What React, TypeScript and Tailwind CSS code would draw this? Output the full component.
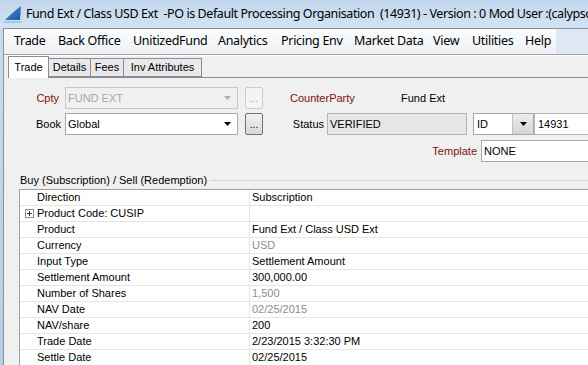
import React from "react";

const ui = { fontFamily: '"Noto Sans", "Open Sans", sans-serif', letterSpacing: "-0.3px" };
const uiTitle = { fontFamily: '"Noto Sans", "Open Sans", sans-serif', letterSpacing: "-0.42px" };
const tah = { fontFamily: '"Liberation Sans", Arial, sans-serif' };

function Arrow({ color = "#000" }: { color?: string }) {
  return (
    <svg width="7" height="4" viewBox="0 0 7 4">
      <path d="M0 0 L7 0 L3.5 4 Z" fill={color} />
    </svg>
  );
}

const menu: [string, string][] = [
  ["Trade", "w-[44px]"],
  ["Back Office", "w-[75px]"],
  ["UnitizedFund", "w-[85px]"],
  ["Analytics", "w-[63px]"],
  ["Pricing Env", "w-[73px]"],
  ["Market Data", "w-[79px]"],
  ["View", "w-[39px]"],
  ["Utilities", "w-[53px]"],
  ["Help", "w-[38px]"],
];

const rows: { k: string; v: string; gray?: boolean; plus?: boolean }[] = [
  { k: "Direction", v: "Subscription" },
  { k: "Product Code: CUSIP", v: "", plus: true },
  { k: "Product", v: "Fund Ext / Class USD Ext" },
  { k: "Currency", v: "USD", gray: true },
  { k: "Input Type", v: "Settlement Amount" },
  { k: "Settlement Amount", v: "300,000.00" },
  { k: "Number of Shares", v: "1,500", gray: true },
  { k: "NAV Date", v: "02/25/2015", gray: true },
  { k: "NAV/share", v: "200" },
  { k: "Trade Date", v: "2/23/2015 3:32:30 PM" },
  { k: "Settle Date", v: "02/25/2015" },
];

export default function App() {
  return (
    <div className="w-[588px] h-[365px] overflow-hidden flex flex-col bg-[#f0f0f0]">
      {/* Title bar */}
      <div className="h-[28px] shrink-0 flex items-center bg-gradient-to-b from-[#c2d6ec] to-[#d3e3f3] overflow-hidden">
        <div className="w-[26px] shrink-0 h-[28px] flex items-center justify-center">
          <svg width="20" height="18" viewBox="0 0 20 18">
            <defs>
              <linearGradient id="sg" x1="0" y1="0" x2="1" y2="1">
                <stop offset="0" stopColor="#5aa0e0" />
                <stop offset="1" stopColor="#1a4f9c" />
              </linearGradient>
            </defs>
            <path d="M2 15 C7 10 12 5 18 1 L17 15 Z" fill="url(#sg)" />
            <path d="M1 16.5 L19 16.5 L19 17.5 L1 17.5 Z" fill="#7fb4e6" />
          </svg>
        </div>
        <div className="text-[12.5px] text-black whitespace-pre leading-none" style={uiTitle}>
          Fund Ext / Class USD Ext  -PO is Default Processing Organisation  (14931) - Version : 0 Mod User :(calypso
        </div>
      </div>
      <div className="flex flex-1 min-h-0">
        {/* left frame */}
        <div className="w-[3px] shrink-0 bg-gradient-to-b from-[#c9dbee] to-[#b6cde6]" />
        <div className="flex-1 flex flex-col border-l border-t border-[#8a9199] min-w-0">
          {/* Menu bar */}
          <div className="h-[25px] shrink-0 flex items-center bg-gradient-to-b from-[#fbfcfd] to-[#eef1f5] text-[12.5px] text-black" style={ui}>
            <div className="w-[3px] shrink-0" />
            {menu.map(([m, w]) => (
              <div key={m} className={`${w} shrink-0 pl-[7px] whitespace-nowrap`}>{m}</div>
            ))}
            <div className="flex-1 h-full bg-[#dde8f4]" />
          </div>
          <div className="h-[2px] shrink-0 bg-[#a0a0a0] border-b border-[#ffffff]" />
          {/* Tabs */}
          <div className="h-[22px] shrink-0 flex items-end text-[11px] pl-[4px]" style={tah}>
            <div className="h-[22px] w-[41px] bg-white border border-b-0 border-[#898c95] flex items-center justify-center">Trade</div>
            <div className="flex-1 flex items-end h-full border-b border-[#898c95]">
              <div className="h-[19px] w-[42px] bg-[#e9e9e9] border border-l-0 border-[#898c95] flex items-center justify-center">Details</div>
              <div className="h-[19px] w-[33px] bg-[#e9e9e9] border border-l-0 border-[#898c95] flex items-center justify-center">Fees</div>
              <div className="h-[19px] w-[78px] bg-[#e9e9e9] border border-l-0 border-[#898c95] flex items-center justify-center">Inv Attributes</div>
            </div>
          </div>
          {/* Form */}
          <div className="flex flex-col pt-[9px] text-[11px] text-black" style={tah}>
            <div className="flex items-center h-[22px]">
              <div className="w-[58px] text-right pr-[3px] text-[#7b1111]">Cpty</div>
              <div className="ml-[3px] w-[173px] h-[22px] border border-[#c8c8c8] bg-[#f0f0f0] flex items-center justify-between pl-[2px] pr-[6px] text-[#a8a8a8]">
                <span>FUND EXT</span>
                <Arrow color="#b0b0b0" />
              </div>
              <div className="ml-[7px] w-[18px] h-[22px] border border-[#cdcdcd] rounded-[2px] bg-[#f4f4f4] flex items-end justify-center pb-[4px] text-[#a0a0a0] text-[10px] leading-none">...</div>
              <div className="ml-[27px] w-[111px] text-[#7b1111]">CounterParty</div>
              <div>Fund Ext</div>
            </div>
            <div className="flex items-center h-[22px] mt-[4px]">
              <div className="w-[58px] text-right pr-[1px]">Book</div>
              <div className="ml-[3px] w-[173px] h-[22px] border border-[#a8a8a8] bg-white flex items-center justify-between pl-[2px] pr-[6px]">
                <span>Global</span>
                <Arrow />
              </div>
              <div className="ml-[7px] w-[18px] h-[22px] border border-[#707070] rounded-[2px] bg-gradient-to-b from-[#f2f2f2] to-[#d8d8d8] flex items-end justify-center pb-[4px] text-[10px] leading-none">...</div>
              <div className="w-[64px] text-right pr-[3px]">Status</div>
              <div className="w-[140px] h-[22px] border border-[#b5b5b5] bg-[#e6e6e6] flex items-center pl-[2px]">VERIFIED</div>
              <div className="ml-[6px] w-[61px] h-[22px] border border-[#a8a8a8] bg-white flex items-center">
                <span className="flex-1 pl-[3px]">ID</span>
                <div className="w-[21px] h-full bg-gradient-to-b from-[#ececec] to-[#d6d6d6] border-l border-[#c0c0c0] flex items-center justify-center"><Arrow /></div>
              </div>
              <div className="flex-1 h-[22px] border border-r-0 border-[#b5b5b5] bg-white flex items-center pl-[3px]">14931</div>
            </div>
            <div className="flex items-center h-[22px] mt-[5px]">
              <div className="w-[477px] text-right pr-[4px] text-[#7b1111]">Template</div>
              <div className="flex-1 h-[22px] border border-r-0 border-[#a8a8a8] bg-white flex items-center pl-[2px]">NONE</div>
            </div>
          </div>
          {/* Group */}
          <div className="mt-[12px] flex items-center h-[13px] text-[11px]" style={tah}>
            <span className="ml-[16px] whitespace-nowrap">Buy (Subscription) / Sell (Redemption)</span>
            <div className="flex-1 ml-[3px] h-px bg-[#d5d5d5]" />
          </div>
          <div className="mt-[2px] ml-[15px] border-l border-t border-[#a0a0a0] bg-white text-[11px]" style={tah}>
            {rows.map((r) => (
              <div key={r.k} className="flex h-[16px] border-b border-[#e6e6e6]">
                <div className="w-[230px] flex items-center border-r border-[#e6e6e6]">
                  <div className="w-[17px] flex items-center justify-center">
                    {r.plus && (
                      <div className="w-[9px] h-[9px] border border-[#8f8f8f] flex items-center justify-center ml-[2px]">
                        <svg width="5" height="5" viewBox="0 0 5 5"><path d="M0 2.5 H5 M2.5 0 V5" stroke="#333" strokeWidth="1" /></svg>
                      </div>
                    )}
                  </div>
                  <span className="whitespace-nowrap">{r.k}</span>
                </div>
                <div className={`flex-1 flex items-center pl-[2px] whitespace-nowrap ${r.gray ? "text-[#8c8c8c]" : "text-black"}`}>{r.v}</div>
              </div>
            ))}
          </div>
        </div>
      </div>
    </div>
  );
}
